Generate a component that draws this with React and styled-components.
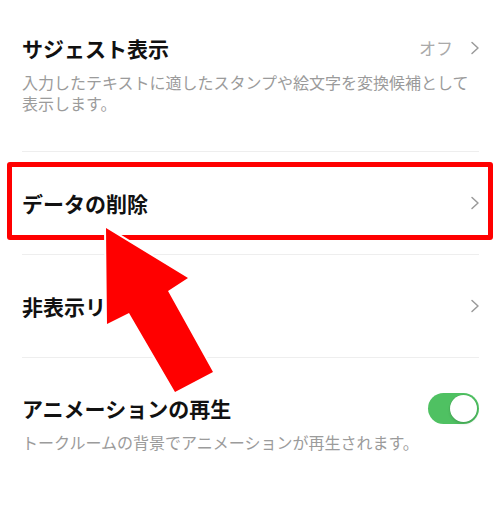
import React from 'react';
import styled, {createGlobalStyle} from 'styled-components';

const GlobalStyle = createGlobalStyle`
	html, body{
		margin: 0;
		padding: 0;
		background: #fff;
	}
	body{
		font-family: "Noto Sans CJK JP", "Noto Sans", sans-serif;
		-webkit-font-smoothing: antialiased;
	}
`

const settings = [
	{
		title: 'サジェスト表示',
		value: 'オフ',
		chevron: true,
		desc: ['入力したテキストに適したスタンプや絵文字を変換候補として', '表示します。']
	},
	{
		title: 'データの削除',
		chevron: true,
		highlight: true
	},
	{
		title: '非表示リスト',
		chevron: true
	},
	{
		title: 'アニメーションの再生',
		toggle: true,
		desc: ['トークルームの背景でアニメーションが再生されます。']
	}
]

function Chevron(){
	return(
		<ChevronIcon viewBox="0 0 10 14" width="10" height="14">
			<polyline points="2,1.5 8,7 2,12.5" />
		</ChevronIcon>
	)
}

function Arrow(){
	// annotation arrow pointing at the highlighted row
	return(
		<ArrowLayer viewBox="0 0 500 521" width="500" height="521">
			<polygon
				points="106,228 188,278 168,291 213,372 175,392 129,313 107,324"
				fill="#ff0000"
				stroke="#fff"
				strokeWidth="4"
				strokeLinejoin="miter"
				paintOrder="stroke"
			/>
		</ArrowLayer>
	)
}

export default function App(){
	return(
		<>
			<GlobalStyle />
			<Page>
				<List>
					{settings.map((item, index) =>
						<Row key={index} hasDesc={!!item.desc} first={index === 0} last={index === settings.length - 1}>
							<Head>
								<Title>{item.title}</Title>
								<Trailing>
									{item.value && <Value>{item.value}</Value>}
									{item.chevron && <Chevron />}
									{item.toggle && <Toggle on><Knob /></Toggle>}
								</Trailing>
							</Head>
							{item.desc &&
								<Desc>
									{item.desc.map((line, i) => <DescLine key={i}>{line}</DescLine>)}
								</Desc>
							}
							{item.highlight && <Highlight />}
						</Row>
					)}
				</List>
				<Arrow />
			</Page>
		</>
	)
}

const Page = styled.div`
	position: relative;
	width: 500px;
	height: 521px;
	overflow: hidden;
	background: #fff;
`

const List = styled.div`
	display: flex;
	flex-direction: column;
	padding: 0 21px 0 22px;
`

const Row = styled.div`
	position: relative;
	display: flex;
	flex-direction: column;
	justify-content: ${({hasDesc}) => hasDesc ? 'flex-start' : 'center'};
	gap: 9px;
	min-height: ${({hasDesc}) => hasDesc ? 0 : 102}px;
	padding: ${({hasDesc, first}) => hasDesc ? (first ? '33px 0 37px' : '35px 0 0') : '0'};
	border-bottom: ${({last}) => last ? 'none' : '1px solid #eeeeee'};
`

const Head = styled.div`
	display: flex;
	align-items: center;
	justify-content: space-between;
	height: 30px;
`

const Title = styled.div`
	font-size: 21px;
	font-weight: 700;
	color: #111;
	line-height: 30px;
`

const Trailing = styled.div`
	display: flex;
	align-items: center;
	gap: 17px;
`

const Value = styled.span`
	font-size: 17px;
	color: #aaa;
	line-height: 30px;
`

const ChevronIcon = styled.svg`
	display: block;
	margin-right: -1px;
	polyline{
		fill: none;
		stroke: #9a9a9a;
		stroke-width: 1.5;
		stroke-linecap: round;
		stroke-linejoin: round;
	}
`

const Toggle = styled.div`
	width: 51px;
	height: 31px;
	border-radius: 16px;
	background: ${({on}) => on ? '#4fc162' : '#e5e5e5'};
	display: flex;
	align-items: center;
	justify-content: ${({on}) => on ? 'flex-end' : 'flex-start'};
	padding: 2px;
	box-sizing: border-box;
`

const Knob = styled.div`
	width: 27px;
	height: 27px;
	border-radius: 50%;
	background: #fff;
	box-shadow: 0 0 0 0.5px rgba(0,0,0,0.08), 0 2px 3px rgba(0,0,0,0.12);
`

const Desc = styled.div`
	display: flex;
	flex-direction: column;
	font-size: 16px;
	color: #9b9b9b;
`

const DescLine = styled.span`
	display: block;
	height: 21px;
	line-height: 21px;
	white-space: nowrap;
`

const Highlight = styled.div`
	position: absolute;
	top: 10px;
	bottom: 14px;
	left: -15px;
	right: -14px;
	border: 5px solid #ff0000;
	border-radius: 3px;
	pointer-events: none;
`

const ArrowLayer = styled.svg`
	position: absolute;
	top: 0;
	left: 0;
	pointer-events: none;
`
